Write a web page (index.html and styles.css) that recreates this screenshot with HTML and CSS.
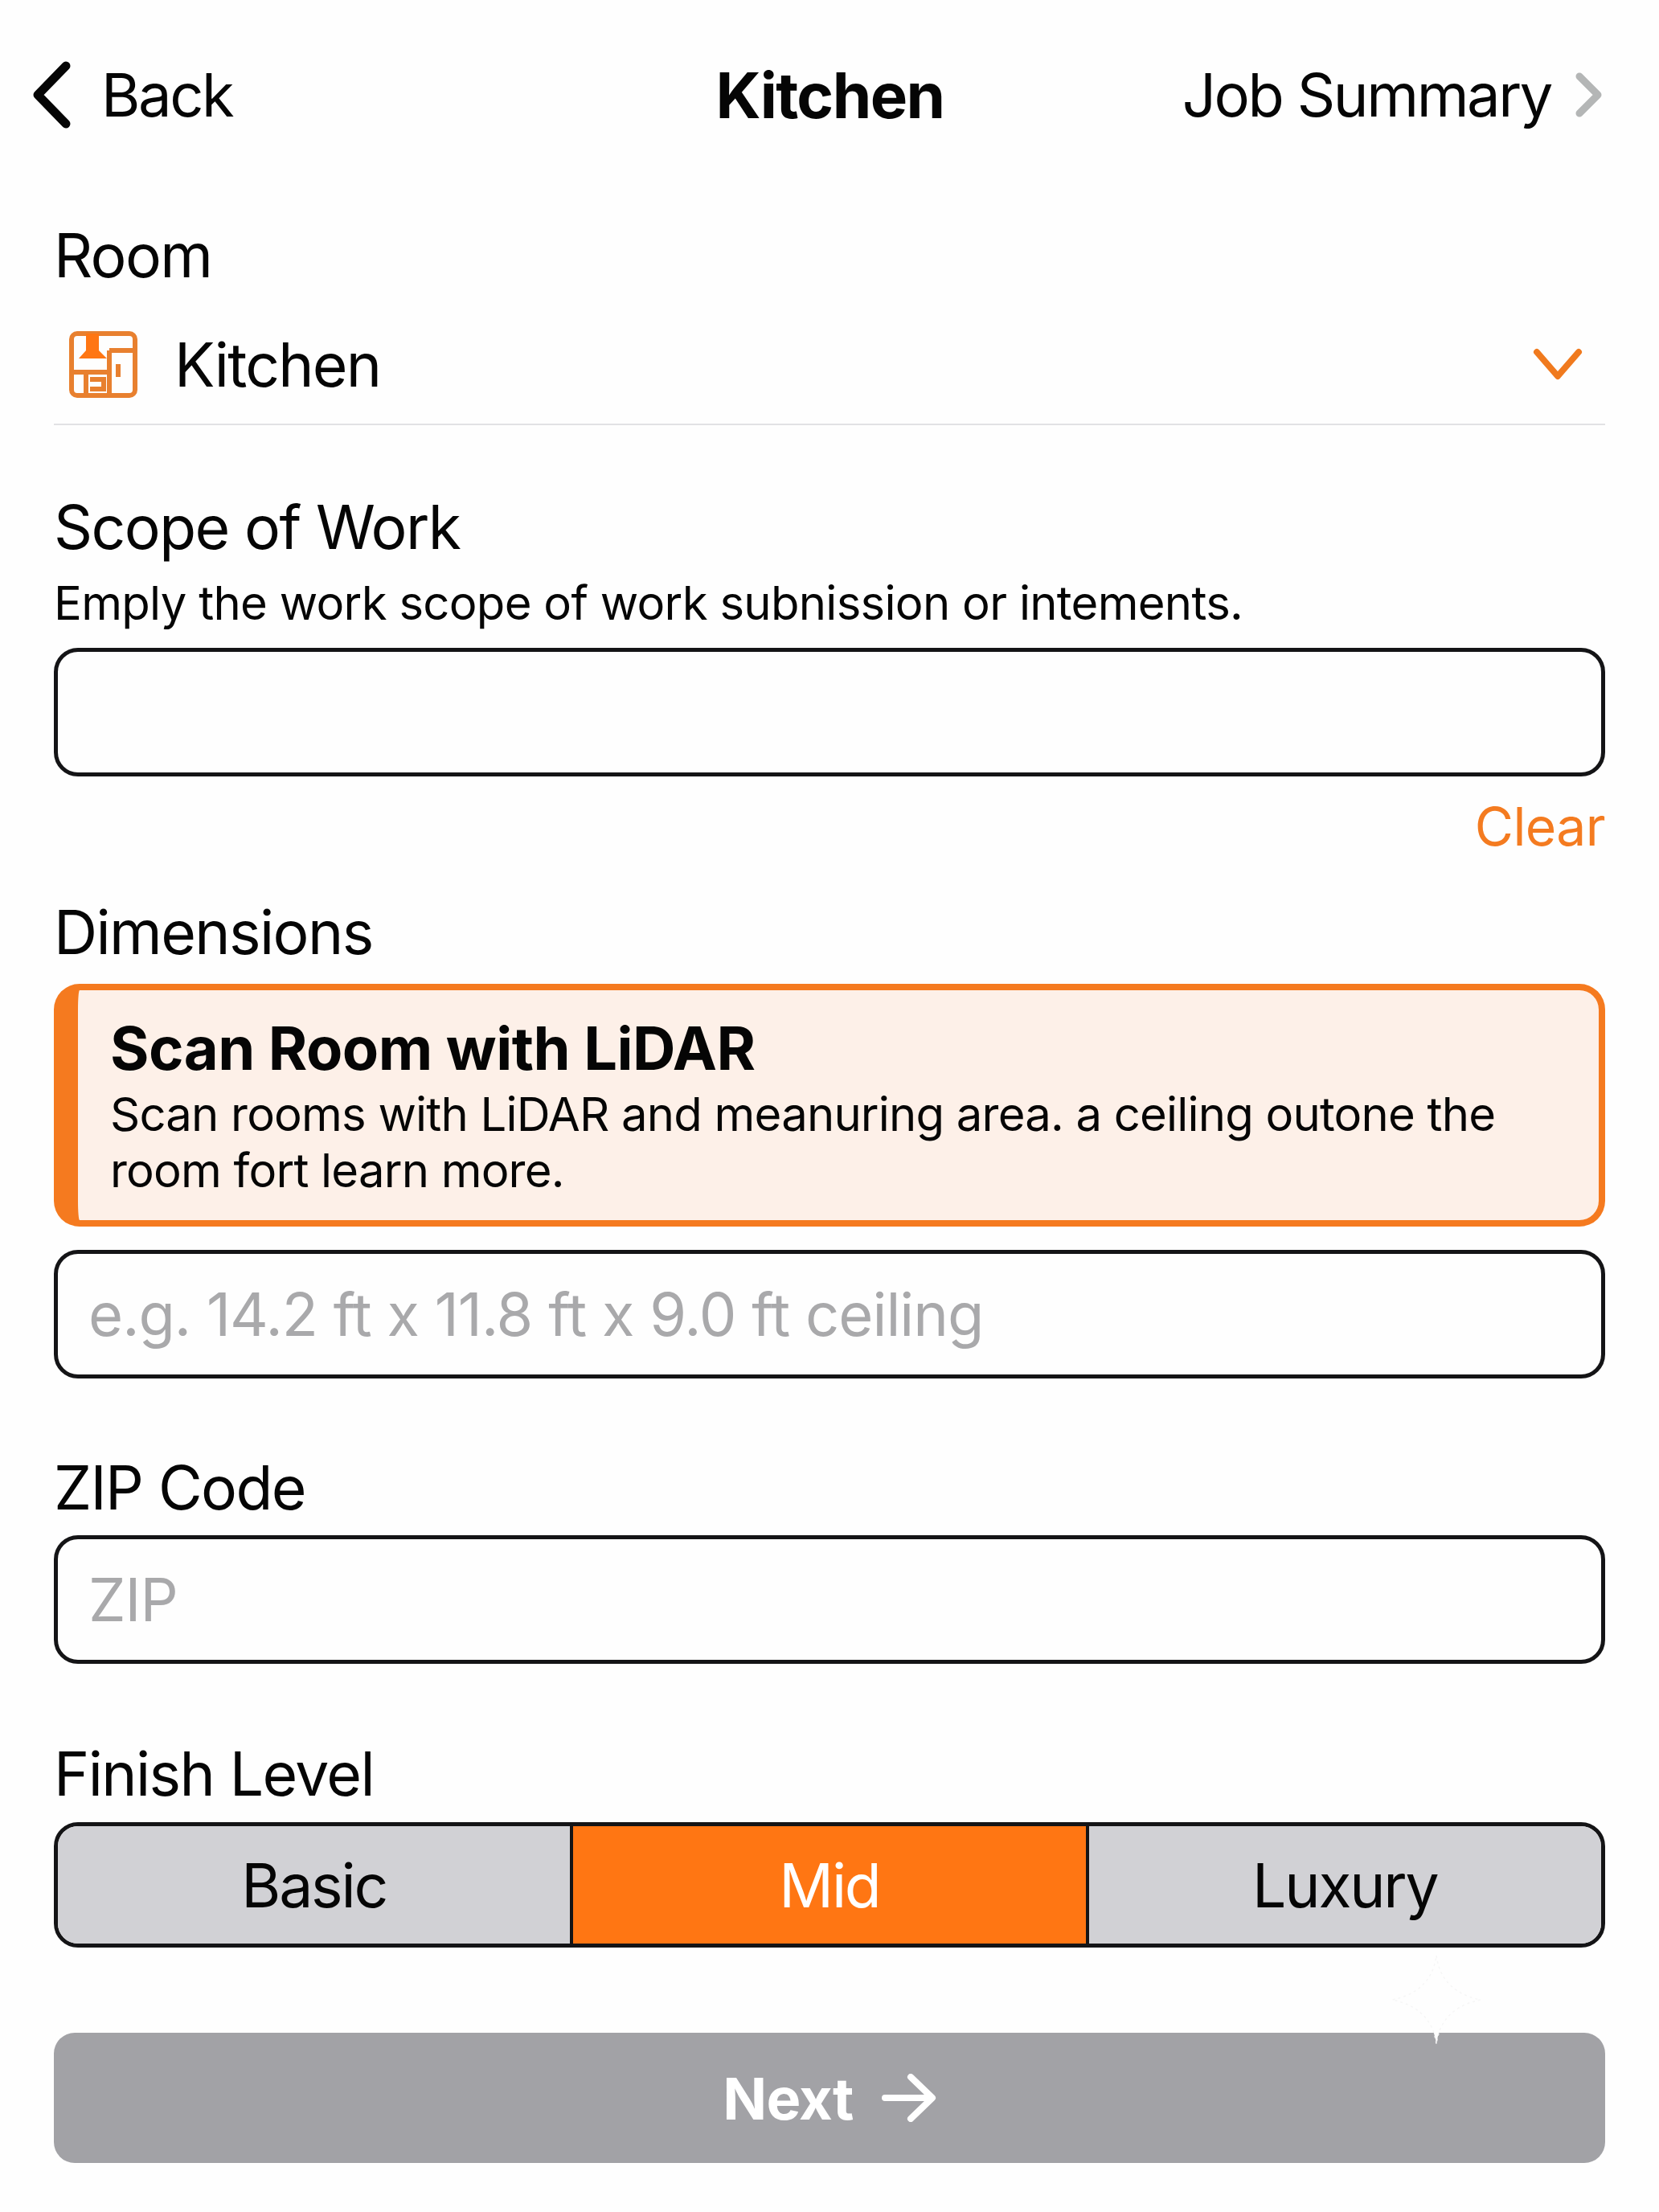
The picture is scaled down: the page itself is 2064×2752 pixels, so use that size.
FILE: index.html
```html
<!DOCTYPE html>
<html lang="en">
<head>
    <meta charset="UTF-8">
    <meta name="viewport" content="width=device-width, initial-scale=1.0">
    <title>Kitchen</title>
    <link rel="stylesheet" href="styles.css">
</head>
<body>
    <header class="topbar">
        <div class="nav-back">
            <svg class="chevron-back" viewBox="0 0 47 84"><path d="M41 6 L6 42 L41 78" /></svg>
            <span>Back</span>
        </div>
        <h1 class="nav-title">Kitchen</h1>
        <div class="nav-next">
            <span>Job Summary</span>
            <svg class="chevron-next" viewBox="0 0 34 56"><path d="M5 5 L28 28 L5 51" /></svg>
        </div>
    </header>

    <main class="form">
        <div class="label room-label">Room</div>
        <div class="room-row">
            <svg class="room-icon" viewBox="0 0 85 83">
                <rect x="3" y="3" width="79" height="77" rx="7" class="icon-line" />
                <path d="M21 3 H37 V24 L47 34 H12 L21 24 Z" class="icon-fill" />
                <path d="M50 24 H82 M50 24 V80 M3 51 H50 M21 51 V80 M61 41 V57 M26 60 H43 V72 H26" class="icon-line" />
            </svg>
            <span class="room-name">Kitchen</span>
            <svg class="chevron-down" viewBox="0 0 62 40"><path d="M5 5 L31 35 L57 5" /></svg>
        </div>

        <div class="label scope-label">Scope of Work</div>
        <p class="hint">Emply the work scope of work subnission or intements.</p>
        <div class="field"></div>
        <div class="clear">Clear</div>

        <div class="label dim-label">Dimensions</div>
        <div class="scan-card">
            <div class="scan-title">Scan Room with LiDAR</div>
            <p class="scan-text">Scan rooms with LiDAR and meanuring area. a ceiling outone the<br>room fort learn more.</p>
        </div>
        <div class="field dim-field"><span class="placeholder">e.g. 14.2 ft x 11.8 ft x 9.0 ft ceiling</span></div>

        <div class="label zip-label">ZIP Code</div>
        <div class="field zip-field"><span class="placeholder">ZIP</span></div>

        <div class="label finish-label">Finish Level</div>
        <div class="segments">
            <div class="segment">Basic</div>
            <div class="segment active">Mid</div>
            <div class="segment">Luxury</div>
        </div>

        <button class="next-btn">
            <span>Next</span>
            <svg class="next-arrow" viewBox="0 0 68 60"><path d="M4 30 H62 M36 4 L63 30 L36 56" /></svg>
        </button>
    </main>

    <svg class="sparkle" viewBox="0 0 112 112"><path d="M56 1 Q62 46 111 56 Q62 66 56 111 Q50 66 1 56 Q50 46 56 1 Z" /></svg>
</body>
</html>
```

FILE: styles.css
```css
body {
    margin: 0;
    width: 2064px;
    height: 2752px;
    position: relative;
    overflow: hidden;
    background-color: #fefefe;
    color: #050505;
    font-family: 'Inter', 'Liberation Sans', sans-serif;
}

.topbar {
    display: flex;
    align-items: center;
    justify-content: space-between;
    height: 116px;
    padding: 60px 70px 0 41px;
    font-size: 74px;
    letter-spacing: -2.4px;
}

.nav-back,
.nav-next {
    display: flex;
    align-items: center;
    flex: 1;
}

.nav-next {
    justify-content: flex-end;
}

.nav-back span {
    margin-left: 38px;
}

.nav-next span {
    margin-right: 30px;
}

.chevron-back {
    width: 47px;
    height: 84px;
}

.chevron-back path {
    fill: none;
    stroke: #050505;
    stroke-width: 11;
    stroke-linecap: round;
    stroke-linejoin: round;
}

.chevron-next {
    width: 34px;
    height: 56px;
}

.chevron-next path {
    fill: none;
    stroke: #b4b6b6;
    stroke-width: 9;
    stroke-linecap: round;
    stroke-linejoin: round;
}

.nav-title {
    margin: 0 0 0 30px;
    font-size: 78px;
    font-weight: 700;
    letter-spacing: -1.6px;
}

.form {
    padding: 0 67px;
}

.label {
    font-size: 75px;
    line-height: 88px;
    letter-spacing: -1.6px;
}

.room-label {
    margin-top: 98px;
}

.room-row {
    display: flex;
    align-items: center;
    height: 148px;
    padding: 17px 28px 0 19px;
    border-bottom: 2px solid #e2e2e4;
    font-size: 75px;
    letter-spacing: -1.8px;
}

.room-icon {
    width: 85px;
    height: 83px;
}

.icon-line {
    fill: none;
    stroke: #e8802f;
    stroke-width: 6;
}

.icon-fill {
    fill: #ff7613;
}

.room-name {
    margin-left: 46px;
    flex: 1;
}

.chevron-down {
    width: 62px;
    height: 40px;
}

.chevron-down path {
    fill: none;
    stroke: #f07a1e;
    stroke-width: 8;
    stroke-linecap: round;
    stroke-linejoin: round;
}

.scope-label {
    margin-top: 83px;
}

.hint {
    margin: 10px 0 0;
    font-size: 58px;
    line-height: 80px;
    letter-spacing: -0.7px;
}

.field {
    display: flex;
    align-items: center;
    box-sizing: border-box;
    height: 160px;
    margin-top: 16px;
    padding: 0 38px;
    border: 5px solid #141416;
    border-radius: 30px;
    background-color: #fefefe;
}

.placeholder {
    font-size: 74px;
    letter-spacing: -1px;
    color: #a9a9ab;
}

.clear {
    margin-top: 32px;
    text-align: right;
    font-size: 66px;
    line-height: 60px;
    letter-spacing: -0.6px;
    color: #f47b20;
}

.dim-label {
    margin-top: 58px;
}

.scan-card {
    box-sizing: border-box;
    height: 302px;
    margin-top: 20px;
    padding: 28px 0 0 40px;
    border: 8px solid #f57a1f;
    border-left-width: 30px;
    border-radius: 32px;
    background-color: #fdf0e8;
}

.scan-title {
    font-size: 74px;
    font-weight: 700;
    line-height: 88px;
    letter-spacing: -0.5px;
}

.scan-text {
    margin: 3px 0 0;
    font-size: 58px;
    line-height: 70px;
    letter-spacing: -0.8px;
    white-space: nowrap;
}

.dim-field {
    margin-top: 29px;
}

.zip-label {
    margin-top: 92px;
}

.zip-field {
    margin-top: 15px;
}

.finish-label {
    margin-top: 93px;
}

.segments {
    display: flex;
    box-sizing: border-box;
    height: 156px;
    margin-top: 16px;
    border: 5px solid #141416;
    border-radius: 30px;
    overflow: hidden;
}

.segment {
    flex: 1;
    display: flex;
    align-items: center;
    justify-content: center;
    background-color: #d1d1d5;
    font-size: 75px;
    letter-spacing: -2.2px;
}

.segment + .segment {
    border-left: 4px solid #141416;
}

.segment.active {
    background-color: #ff7613;
    color: #fff;
}

.next-btn {
    display: flex;
    align-items: center;
    justify-content: center;
    gap: 35px;
    width: 100%;
    height: 162px;
    margin-top: 106px;
    border: 0;
    border-radius: 26px;
    background-color: #a2a2a6;
    color: #fff;
    font-family: inherit;
    font-size: 72px;
    font-weight: 700;
    letter-spacing: -0.8px;
}

.next-arrow {
    width: 68px;
    height: 60px;
}

.next-arrow path {
    fill: none;
    stroke: #fff;
    stroke-width: 8;
    stroke-linecap: round;
    stroke-linejoin: round;
}

/* faint star mark over the button edge */
.sparkle {
    position: absolute;
    left: 1731px;
    top: 2432px;
    width: 112px;
    height: 112px;
}

.sparkle path {
    fill: #fefefe;
    stroke: #f6f6f6;
    stroke-width: 1.5;
    stroke-dasharray: 3 4;
}
```
